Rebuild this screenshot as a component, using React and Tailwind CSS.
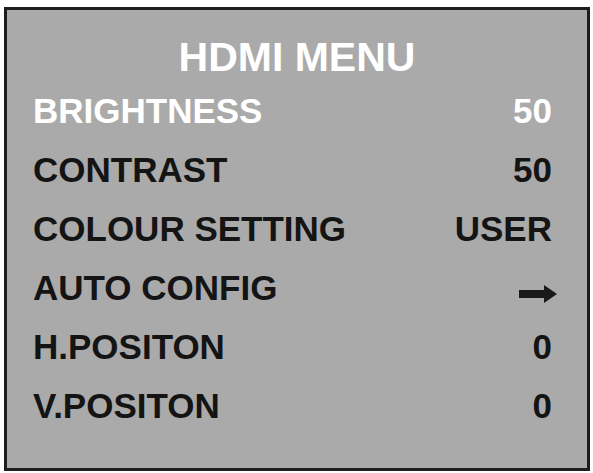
import React from "react";

const rows = [
  { label: "BRIGHTNESS", value: "50", active: true },
  { label: "CONTRAST", value: "50" },
  { label: "COLOUR SETTING", value: "USER" },
  { label: "AUTO CONFIG", arrow: true },
  { label: "H.POSITON", value: "0" },
  { label: "V.POSITON", value: "0" },
];

function Arrow() {
  return (
    <svg width="38" height="18" viewBox="0 0 38 18" className="mt-[12px] mr-[-5px]">
      <path d="M0 5 H25 V0 L38 9 L25 18 V13 H0 Z" fill="#1a1a1a" />
    </svg>
  );
}

export default function App() {
  return (
    <div className="w-[593px] h-[473px] bg-white pt-[7px] pl-[4px]" style={{ fontFamily: '"Liberation Sans", Arial, sans-serif' }}>
      <div className="w-[586px] h-[464px] border-[3px] border-[#1e1e1e] bg-[#aaaaaa] flex flex-col">
        <div className="mt-[23px] h-[48px] leading-[48px] text-center text-white font-bold text-[41px]">
          HDMI MENU
        </div>
        <div className="flex flex-col pl-[26px] pr-[35px]">
          {rows.map((r) => (
            <div
              key={r.label}
              className={`h-[59px] flex items-center justify-between font-bold text-[35px] leading-[59px] ${r.active ? "text-white" : "text-[#141414]"}`}
            >
              <span>{r.label}</span>
              {r.arrow ? <Arrow /> : <span>{r.value}</span>}
            </div>
          ))}
        </div>
      </div>
    </div>
  );
}
